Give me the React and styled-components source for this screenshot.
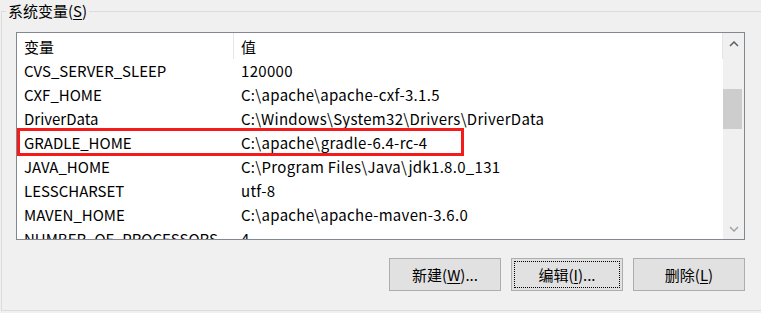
import styled, { createGlobalStyle } from "styled-components";

const Global = createGlobalStyle`
	html, body {
		margin: 0;
		padding: 0;
		background: #f0f0f0;
		overflow: hidden;
	}
	body {
		font-family: "Noto Sans CJK SC", "Noto Sans", sans-serif;
		font-size: 15px;
		color: #000;
	}
`;

const Page = styled.div`
	width: 761px;
	height: 313px;
	padding-left: 1px;
	box-sizing: border-box;
`;

const Group = styled.fieldset`
	margin: 1px 0 0 0;
	padding: 0 0 19px 14px;
	border: 1px solid #dcdcdc;
	border-right: none;
	min-width: 0;
`;

const Caption = styled.legend`
	margin-left: -10px;
	padding: 0 2px;
	line-height: 20px;
	u {
		text-decoration-thickness: 1px;
		text-underline-offset: 2px;
	}
`;

const List = styled.div`
	margin-top: 11px;
	width: 729px;
	height: 208px;
	box-sizing: border-box;
	border: 1px solid #828790;
	background: #fff;
	display: flex;
	overflow: hidden;
`;

const Table = styled.div`
	flex: 1;
	display: flex;
	flex-direction: column;
	overflow: hidden;
`;

const Header = styled.div`
	display: grid;
	grid-template-columns: 217px 1fr;
	height: 26px;
	flex-shrink: 0;
	border-right: 1px solid #e5e5e5;
`;

const HeadCell = styled.div`
	padding: 2px 0 0 7px;
	line-height: 24px;
	border-right: ${(p) => (p.$divider ? "1px solid #e5e5e5" : "none")};
`;

const Row = styled.div`
	position: relative;
	display: grid;
	grid-template-columns: 217px 1fr;
	height: 24px;
	flex-shrink: 0;
	line-height: 24px;
	white-space: nowrap;

	${(p) =>
		p.$marked &&
		`
		&::after {
			content: "";
			position: absolute;
			top: -3px;
			left: 0;
			width: 447px;
			height: 28px;
			box-sizing: border-box;
			border: 3px solid #f41b1b;
			z-index: 1;
		}
	`}
`;

const Cell = styled.div`
	padding-left: 7px;
	letter-spacing: ${(p) => (p.$value ? "0.3px" : "0")};
`;

const ScrollBar = styled.div`
	width: 21px;
	display: flex;
	flex-direction: column;
	background: #f0f0f0;
`;

const Arrow = styled.div`
	height: 21px;
	display: flex;
	align-items: center;
	justify-content: center;
	color: ${(p) => (p.$dim ? "#a3a3a3" : "#606060")};
`;

const Track = styled.div`
	flex: 1;
`;

const Thumb = styled.div`
	width: 19px;
	height: 40px;
	background: #cdcdcd;
`;

const Buttons = styled.div`
	margin-top: 18px;
	width: 729px;
	display: flex;
	justify-content: flex-end;
	gap: 10px;
`;

const Button = styled.button`
	position: relative;
	width: 112px;
	height: 33px;
	border: 1px solid #adadad;
	background: #e1e1e1;
	font: inherit;
	color: #000;
	padding: 0;
	u {
		text-underline-offset: 2px;
	}
	${(p) =>
		p.$focused &&
		`
		&::after {
			content: "";
			position: absolute;
			inset: 2px;
			border: 1px dotted #000;
		}
	`}
`;

const Chevron = ({ down }) => (
	<svg width="10" height="6" viewBox="0 0 10 6">
		<path
			d={down ? "M1 1 L5 5 L9 1" : "M1 5 L5 1 L9 5"}
			fill="none"
			stroke="currentColor"
			strokeWidth="1.5"
		/>
	</svg>
);

const rows = [
	["CVS_SERVER_SLEEP", "120000"],
	["CXF_HOME", "C:\\apache\\apache-cxf-3.1.5"],
	["DriverData", "C:\\Windows\\System32\\Drivers\\DriverData"],
	["GRADLE_HOME", "C:\\apache\\gradle-6.4-rc-4"],
	["JAVA_HOME", "C:\\Program Files\\Java\\jdk1.8.0_131"],
	["LESSCHARSET", "utf-8"],
	["MAVEN_HOME", "C:\\apache\\apache-maven-3.6.0"],
	["NUMBER_OF_PROCESSORS", "4"],
];

export default function App() {
	return (
		<>
			<Global />
			<Page>
				<Group>
					<Caption>
						系统变量(<u>S</u>)
					</Caption>
					<List>
						<Table>
							<Header>
								<HeadCell $divider>变量</HeadCell>
								<HeadCell>值</HeadCell>
							</Header>
							{rows.map(([name, value]) => (
								<Row key={name} $marked={name === "GRADLE_HOME"}>
									<Cell>{name}</Cell>
									<Cell $value>{value}</Cell>
								</Row>
							))}
						</Table>
						<ScrollBar>
							<Arrow>
								<Chevron />
							</Arrow>
							<Track>
								<Thumb style={{ marginTop: 35 }} />
							</Track>
							<Arrow $dim>
								<Chevron down />
							</Arrow>
						</ScrollBar>
					</List>
					<Buttons>
						<Button>
							新建(<u>W</u>)...
						</Button>
						<Button $focused>
							编辑(<u>I</u>)...
						</Button>
						<Button>
							删除(<u>L</u>)
						</Button>
					</Buttons>
				</Group>
			</Page>
		</>
	);
}
